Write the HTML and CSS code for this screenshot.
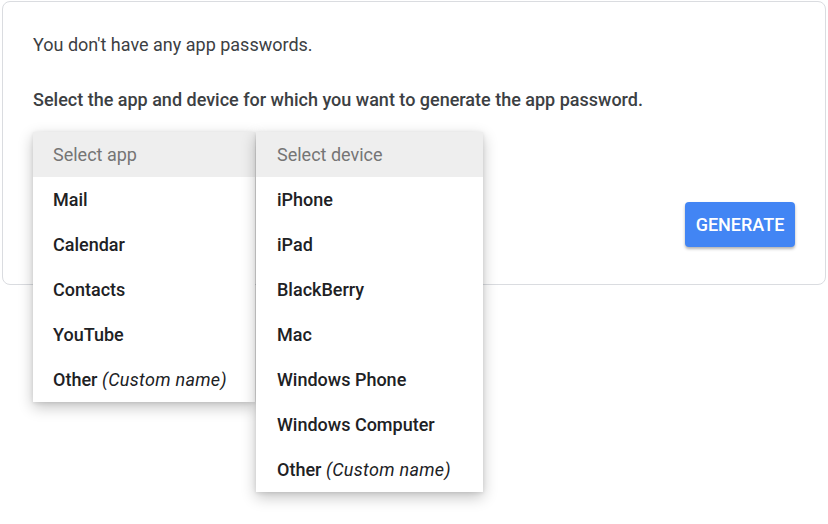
FILE: index.html
```html
<!DOCTYPE html>
<html>
<head>
<meta charset="utf-8">
<link rel="stylesheet" href="styles.css">
</head>
<body>
<div class="card">
  <p class="note">You don't have any app passwords.</p>
  <p class="lead">Select the app and device for which you want to generate the app password.</p>
  <div class="controls">
    <div class="selects">
      <ul class="menu menu-app">
        <li class="head">Select app</li>
        <li>Mail</li>
        <li>Calendar</li>
        <li>Contacts</li>
        <li>YouTube</li>
        <li>Other <em>(Custom name)</em></li>
      </ul>
      <ul class="menu menu-device">
        <li class="head">Select device</li>
        <li>iPhone</li>
        <li>iPad</li>
        <li>BlackBerry</li>
        <li>Mac</li>
        <li>Windows Phone</li>
        <li>Windows Computer</li>
        <li>Other <em>(Custom name)</em></li>
      </ul>
    </div>
    <button class="generate">GENERATE</button>
  </div>
</div>
</body>
</html>
```

FILE: styles.css
```css
html, body {
  margin: 0;
  padding: 0;
  background: #ffffff;
}
body {
  min-height: 100vh;
  font-family: Roboto, "Noto Sans", Arial, sans-serif;
  font-size: 18px;
  color: #3c4043;
}
.card {
  margin: 1px 2px 0 2px;
  border: 1px solid #dadce0;
  border-radius: 8px;
  padding: 31px 30px 37px 30px;
}
.note {
  margin: 0;
  line-height: 24px;
  color: #3c4043;
}
.lead {
  margin: 31px 0 0 0;
  line-height: 24px;
  font-weight: 500;
  color: #3c4043;
}
.controls {
  margin-top: 20px;
  display: flex;
  align-items: flex-start;
}
.selects {
  display: flex;
  align-items: flex-start;
  height: 45px;
  position: relative;
  z-index: 2;
}
.menu {
  list-style: none;
  margin: 0;
  padding: 0;
  background: #ffffff;
  box-shadow: 0 5px 14px rgba(0, 0, 0, 0.24), 0 1px 4px rgba(0, 0, 0, 0.1);
}
.menu-app {
  width: 222px;
}
.menu-device {
  width: 227px;
  margin-left: 1px;
}
.menu li {
  height: 45px;
  line-height: 45px;
  padding-left: 20px;
  font-weight: 500;
  color: #202124;
  white-space: nowrap;
}
.menu-device li {
  padding-left: 21px;
}
.menu li.head {
  background: #eeeeee;
  font-weight: 400;
  color: #757575;
}
.menu em {
  font-style: italic;
  font-weight: 400;
  letter-spacing: 0.3px;
}
.generate {
  margin: 70px 0 0 auto;
  height: 45px;
  width: 110px;
  border: none;
  border-radius: 4px;
  background: #4285f4;
  color: #ffffff;
  font-family: Roboto, "Noto Sans", Arial, sans-serif;
  font-size: 18px;
  font-weight: 500;
  padding: 0;
  box-shadow: 0 2px 3px rgba(0, 0, 0, 0.3);
}
```
